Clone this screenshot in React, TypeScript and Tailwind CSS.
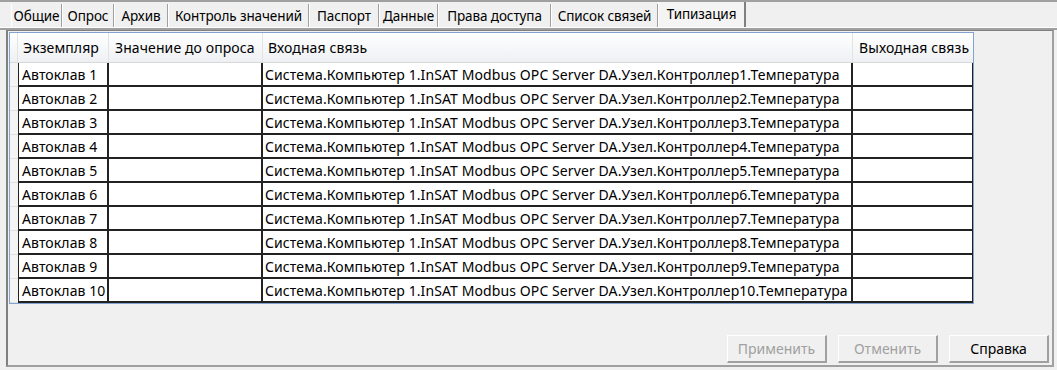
import React from "react";

const tabs = [
  { label: "Общие", w: 51 },
  { label: "Опрос", w: 52 },
  { label: "Архив", w: 54 },
  { label: "Контроль значений", w: 141 },
  { label: "Паспорт", w: 70 },
  { label: "Данные", w: 59 },
  { label: "Права доступа", w: 113 },
  { label: "Список связей", w: 107 },
];

const heights = [24, 24, 24, 24, 24, 24, 24, 24, 24, 24];

export default function App() {
  return (
    <div
      className="w-[1057px] h-[370px] bg-[#f0f0f0] flex flex-col overflow-hidden text-black"
      style={{ fontFamily: '"Noto Sans", "Open Sans", sans-serif' }}
    >
      <div className="h-[2px] bg-[#a0a0a0] shrink-0" />
      {/* tab strip */}
      <div className="flex items-end h-[25px] pl-[11px] shrink-0">
        {tabs.map((t) => (
          <div
            key={t.label}
            className="h-[23px] flex items-center justify-center border-l border-l-white border-r border-r-[#a0a0a0] text-[13.5px] tracking-[-0.1px] pt-[1px]"
            style={{ width: t.w }}
          >
            {t.label}
          </div>
        ))}
        <div className="h-[25px] w-[88px] flex items-start justify-center pt-[2px] bg-[#f4f4f4] border-l border-l-white border-r-2 border-r-[#808080] text-[13.5px] tracking-[-0.1px]">
          Типизация
        </div>
      </div>
      <div className="h-[1px] bg-white shrink-0" />
      <div className="h-[2px] bg-[#a0a0a0] shrink-0" />
      {/* panel */}
      <div className="flex-1 ml-[6px] mr-[3px] mb-[3px] border-l-2 border-l-[#808080] border-t border-t-[#808080] border-r-2 border-r-[#a0a0a0] border-b-2 border-b-[#a0a0a0] flex flex-col">
        <div className="flex pl-[1px] pt-[1px]">
          <div className="border border-[#82a2d0] bg-white flex flex-col">
            {/* header */}
            <div className="flex h-[30px] bg-gradient-to-b from-white to-[#eef0f3] border-b border-b-[#d8d8d8] text-[14px] tracking-[0.1px]">
              <div className="w-[8px] border-r border-r-[#e3e3e3]" />
              <div className="w-[91px] border-r border-r-[#e3e3e3] flex items-center pl-[5px]">Экземпляр</div>
              <div className="w-[154px] border-r border-r-[#e3e3e3] flex items-center pl-[6px]">Значение до опроса</div>
              <div className="w-[590px] border-r border-r-[#e3e3e3] flex items-center pl-[5px]">Входная связь</div>
              <div className="w-[120px] flex items-center pl-[6px] whitespace-nowrap">Выходная связь</div>
            </div>
            {heights.map((h, i) => (
              <div key={i} className="flex text-[14px] tracking-[0.1px]" style={{ height: h }}>
                <div className="w-[8px] bg-[#f4f4f4] border-b border-b-[#e0e0e0]" />
                <div className="w-[91px] border-l border-l-[#222] border-r-2 border-r-[#222] border-b-2 border-b-[#222] flex items-center pl-[3px] whitespace-nowrap">
                  Автоклав {i + 1}
                </div>
                <div className="w-[154px] border-r-2 border-r-[#222] border-b-2 border-b-[#222]" />
                <div className="w-[590px] border-r-2 border-r-[#222] border-b-2 border-b-[#222] flex items-center pl-[2px] whitespace-nowrap">
                  Система.Компьютер 1.InSAT Modbus OPC Server DA.Узел.Контроллер{i + 1}.Температура
                </div>
                <div className="w-[120px] border-r border-r-[#222] border-b-2 border-b-[#222]" />
              </div>
            ))}
          </div>
        </div>
        <div className="flex-1" />
        <div className="flex justify-end gap-[11px] pr-[3px] pb-[2px]">
          {[
            { l: "Применить", d: true },
            { l: "Отменить", d: true },
            { l: "Справка", d: false },
          ].map((b) => (
            <div
              key={b.l}
              className={`w-[100px] h-[28px] flex items-center justify-center text-[14px] border-t border-l border-t-white border-l-white border-r-2 border-b-2 border-r-[#a0a0a0] border-b-[#a0a0a0] ${
                b.d ? "text-[#a0a0a0]" : "text-black"
              }`}
            >
              {b.l}
            </div>
          ))}
        </div>
      </div>
    </div>
  );
}
